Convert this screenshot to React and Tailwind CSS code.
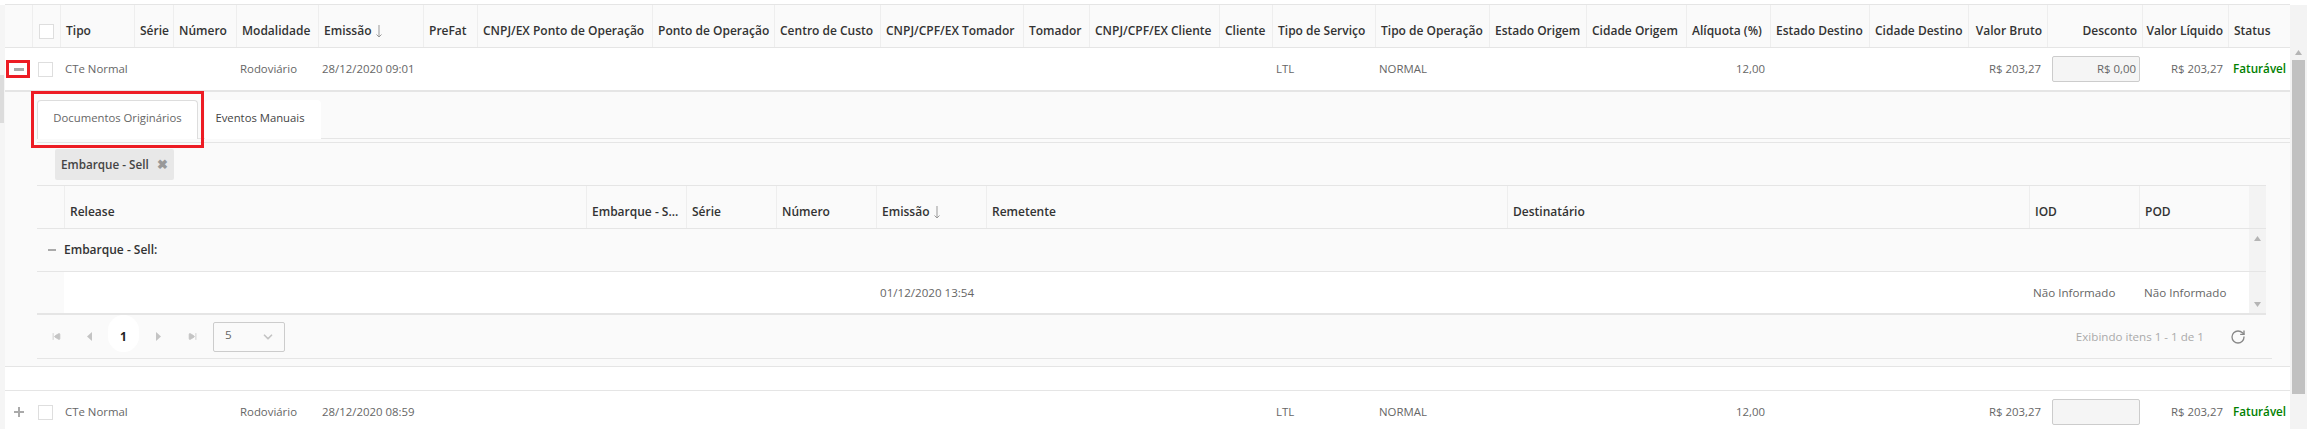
import { ChevronDown, RotateCw, SkipBack, SkipForward } from 'lucide-react';

const colunas = ['Tipo', 'Série', 'Número', 'Modalidade', 'Emissão', 'PreFat', 'CNPJ/EX Ponto de Operação', 'Ponto de Operação', 'Centro de Custo', 'CNPJ/CPF/EX Tomador', 'Tomador', 'CNPJ/CPF/EX Cliente', 'Cliente', 'Tipo de Serviço', 'Tipo de Operação', 'Estado Origem', 'Cidade Origem', 'Alíquota (%)', 'Estado Destino', 'Cidade Destino', 'Valor Bruto', 'Desconto', 'Valor Líquido', 'Status'];
const direita = ['Valor Bruto', 'Desconto', 'Valor Líquido'];
const gridPrincipal = 'grid grid-cols-[27px_28px_74px_39px_63px_82px_105px_54px_175px_122px_106px_143px_66px_130px_53px_103px_114px_97px_100px_84px_99px_99px_79px_95px_86px_62px]';
const gridDetalhe = 'grid grid-cols-[27px_522px_100px_90px_100px_110px_521px_522px_110px_110px_17px]';

function SetaOrdem() {
  return (
    <svg width="8" height="14" viewBox="0 0 8 14" fill="none" stroke="#999" strokeWidth="1" className="ml-1 inline-block">
      <path d="M4 1v12M1.5 10.5 4 13l2.5-2.5" />
    </svg>
  );
}

function Checkbox() {
  return <div className="h-[15px] w-[15px] border border-[#dedede] bg-white" />;
}

function Mais() {
  return (
    <svg width="10" height="10" viewBox="0 0 10 10" fill="#aaa">
      <path d="M4 0h2v4h4v2H6v4H4V6H0V4h4z" />
    </svg>
  );
}

function Triangulo({ baixo }) {
  return (
    <svg width="7" height="5" viewBox="0 0 7 5" fill="#b5b5b5" className={baixo ? 'rotate-180' : ''}>
      <path d="M3.5 0 7 5H0z" />
    </svg>
  );
}

function Seta({ esquerda }) {
  return (
    <svg width="5" height="9" viewBox="0 0 5 9" fill="#c4c4c4" className={esquerda ? 'rotate-180' : ''}>
      <path d="M0 0l5 4.5L0 9z" />
    </svg>
  );
}

function LinhaDocumento({ hora, desconto }) {
  return (
    <div className={`${gridPrincipal} h-[42px] items-center bg-white text-[11.4px] text-[#666]`}>
      <div className="flex justify-center">{desconto ? <div className="h-[3px] w-[10px] bg-[#aaa]" /> : <Mais />}</div>
      <div className="pl-[6px]"><Checkbox /></div>
      <div className="pl-[5px]">CTe Normal</div>
      <div />
      <div />
      <div className="pl-[4px]">Rodoviário</div>
      <div className="pl-[4px] whitespace-nowrap">28/12/2020 {hora}</div>
      <div />
      <div />
      <div />
      <div />
      <div />
      <div />
      <div />
      <div />
      <div className="pl-[4px]">LTL</div>
      <div className="pl-[4px]">NORMAL</div>
      <div />
      <div />
      <div className="pr-[5px] text-right">12,00</div>
      <div />
      <div />
      <div className="pr-[6px] text-right whitespace-nowrap">R$ 203,27</div>
      <div className="pl-[5px] pr-[2px]">
        <div className="flex h-[26px] items-center justify-end rounded-[2px] border border-[#ccc] bg-[#f5f5f5] pr-[3px]">{desconto}</div>
      </div>
      <div className="pr-[5px] text-right whitespace-nowrap">R$ 203,27</div>
      <div className="pl-[5px] text-[11.7px] font-semibold text-[#008000]">Faturável</div>
    </div>
  );
}

export default function App() {
  return (
    <div className="flex h-[429px] w-[2307px] overflow-hidden bg-white text-[12px] [font-family:'Open_Sans',sans-serif]">
      <div className="mt-[5px] w-[5px] shrink-0 bg-[#f5f5f5] pt-[70px]">
        <div className="h-[48px] w-[4px] bg-[#dcdcdc]" />
      </div>

      <div className="w-[2285px] shrink-0 pt-[4px]">
        {/* cabeçalho */}
        <div className={`${gridPrincipal} h-[44px] border-y border-[#e5e5e5] bg-[#fafafa] font-semibold text-[#333]`}>
          <div />
          <div className="flex items-center border-l border-[#eee] pl-[6px] pt-[10px]"><Checkbox /></div>
          {colunas.map((c) => (
            <div
              key={c}
              className={`flex items-center whitespace-nowrap border-l border-[#eee] px-[5px] pt-[10px] ${direita.includes(c) ? 'justify-end' : ''}`}
            >
              {c}
              {c === 'Emissão' && <SetaOrdem />}
            </div>
          ))}
        </div>

        <LinhaDocumento hora="09:01" desconto="R$ 0,00" />

        {/* detalhe */}
        <div className="relative h-[276px] border-t-2 border-[#e5e5e5] bg-[#fafafa] pl-[32px]">
          <div className="flex h-[47px] items-end border-b border-[#e5e5e5] pt-[7px] text-[11.3px]">
            <div className="-mb-px flex h-[39px] w-[161px] items-center justify-center rounded-t-[4px] border border-b-0 border-[#ddd] bg-white pb-[3px] text-[#666]">
              Documentos Originários
            </div>
            <div className="-mb-px ml-[7px] flex h-[39px] w-[116px] items-center justify-center rounded-t-[4px] bg-white pb-[3px] pr-[6px] text-[#444]">
              Eventos Manuais
            </div>
          </div>
          <div className="mt-[3px] flex h-[43px] items-start border-t border-[#e5e5e5] pl-[18px] pt-[6px]">
            <div className="flex h-[31px] w-[119px] items-center gap-[8px] rounded-[2px] bg-[#e8e8e8] pl-[6px] text-[11.7px] font-semibold text-[#444]">
              Embarque - Sell
              <span className="text-[13px] font-bold leading-none text-[#999]">✖</span>
            </div>
          </div>

          <div className="w-[2229px]">
            <div className={`${gridDetalhe} h-[44px] border-y border-[#e5e5e5] font-semibold text-[#333]`}>
              <div />
              {['Release', 'Embarque - S...', 'Série', 'Número', 'Emissão', 'Remetente', 'Destinatário', 'IOD', 'POD'].map((c) => (
                <div key={c} className="flex items-center whitespace-nowrap border-l border-[#eee] px-[5px] pt-[9px]">
                  {c}
                  {c === 'Emissão' && <SetaOrdem />}
                </div>
              ))}
              <div className="bg-[#f3f3f3]" />
            </div>
            <div className="flex h-[43px] border-b border-[#e5e5e5]">
              <div className="flex flex-1 items-center pl-[11px] font-semibold text-[#333]">
                <div className="mr-[8px] h-[2px] w-[8px] bg-[#aaa]" />
                Embarque - Sell:
              </div>
              <div className="flex w-[17px] justify-center bg-[#f3f3f3] pt-[7px]"><Triangulo /></div>
            </div>
            <div className={`${gridDetalhe} h-[43px] items-center border-b-2 border-[#e5e5e5] text-[11.6px] text-[#666]`}>
              <div className="h-full" />
              <div className="col-span-9 grid h-full grid-cols-[522px_100px_90px_100px_110px_521px_522px_110px_110px] items-center bg-white">
                <div />
                <div />
                <div />
                <div />
                <div className="pl-[4px] whitespace-nowrap">01/12/2020 13:54</div>
                <div />
                <div />
                <div className="pl-[4px] whitespace-nowrap">Não Informado</div>
                <div className="pl-[5px] whitespace-nowrap">Não Informado</div>
              </div>
              <div className="flex h-full items-end justify-center bg-[#f3f3f3] pb-[6px]"><Triangulo baixo /></div>
            </div>
          </div>

          {/* paginação */}
          <div className="flex h-[44px] w-[2235px] items-center border-b border-[#e5e5e5] pl-[15px] text-[11.6px]">
            <SkipBack size={9} className="fill-[#c4c4c4] text-[#c4c4c4]" />
            <div className="ml-[26px]"><Seta esquerda /></div>
            <div className="ml-[16px] flex h-[37px] w-[31px] items-center justify-center self-start rounded-full bg-white pt-[6px] text-[12px] font-bold text-[#222]">1</div>
            <div className="ml-[17px]"><Seta /></div>
            <SkipForward size={9} className="ml-[27px] fill-[#c4c4c4] text-[#c4c4c4]" />
            <div className="ml-[16px] flex h-[30px] w-[72px] items-center justify-between rounded-[2px] border border-[#ccc] pb-[4px] pl-[11px] pr-[9px] text-[#666]">
              5
              <ChevronDown size={14} strokeWidth={3} className="mt-[4px] text-[#c4c4c4]" />
            </div>
            <div className="ml-auto mr-[26px] text-[#aaa]">Exibindo itens 1 - 1 de 1</div>
            <RotateCw size={16} strokeWidth={2} className="mr-[26px] text-[#888]" />
          </div>
        </div>

        <div className="h-[25px] border-y border-[#e5e5e5]" />
        <LinhaDocumento hora="08:59" />
      </div>

      {/* barra de rolagem */}
      <div className="mt-[5px] flex w-[17px] shrink-0 flex-col items-center bg-[#f3f3f3]">
        <div className="mt-[45px] mb-[5px]"><Triangulo /></div>
        <div className="h-[334px] w-[13px] bg-[#c1c1c1]" />
      </div>

      {/* destaques em vermelho */}
      <div className="absolute left-[6px] top-[60px] h-[18px] w-[24px] border-[3px] border-[#ed1c24]" />
      <div className="absolute left-[31px] top-[91px] h-[57px] w-[173px] border-[3px] border-[#ed1c24]" />
    </div>
  );
}
